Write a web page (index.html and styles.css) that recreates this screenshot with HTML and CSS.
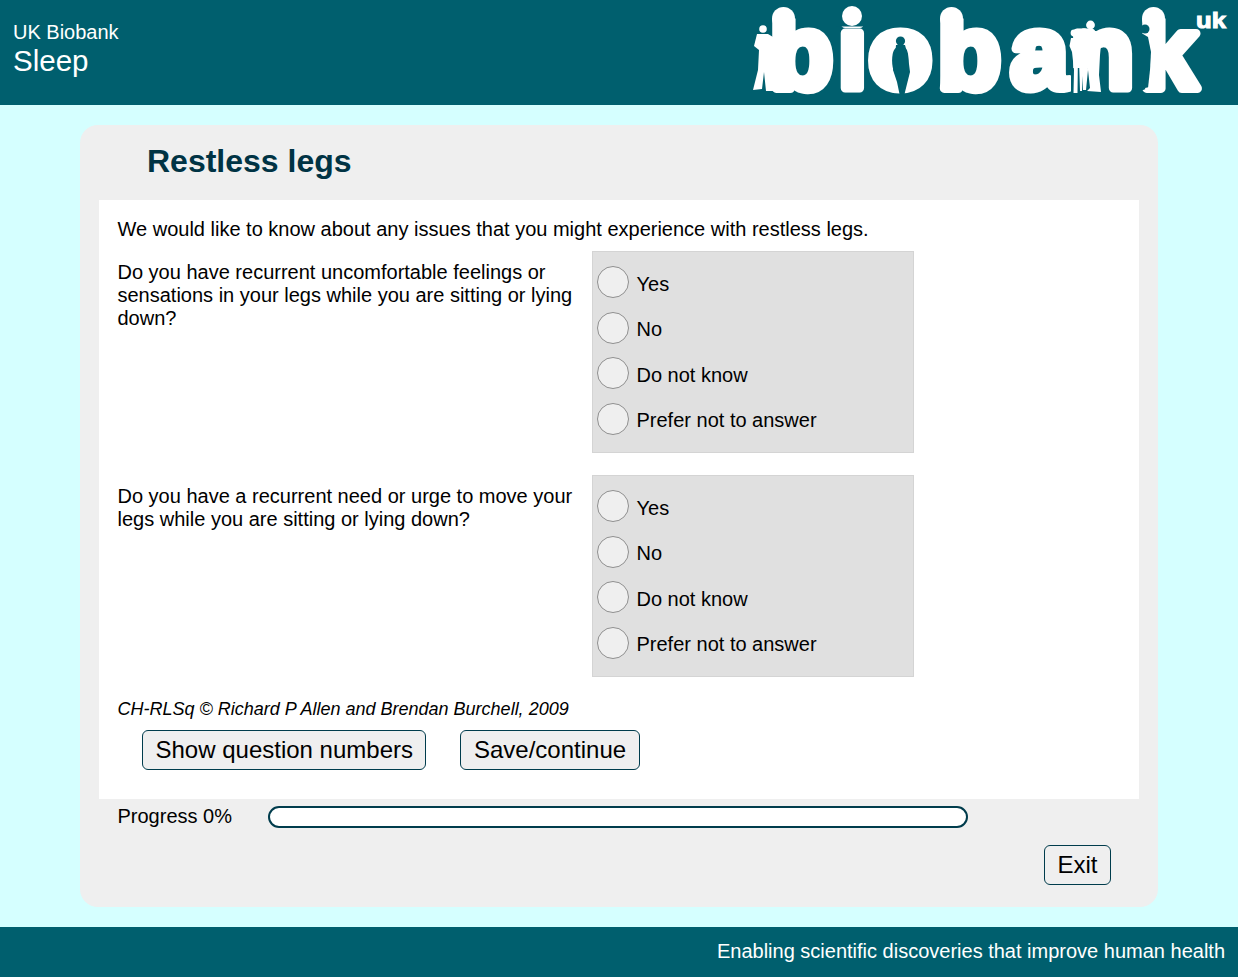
FILE: index.html
```html
<!DOCTYPE html>
<html lang="en">
<head>
  <meta charset="UTF-8" />
  <title>UK Biobank Sleep</title>
  <link rel="stylesheet" href="styles.css">
</head>
<body>

  <header class="topbar">
    <div class="study">
      <div class="study-org">UK Biobank</div>
      <div class="study-name">Sleep</div>
    </div>
    <svg class="logo" viewBox="0 0 498 105" role="img" aria-label="biobank uk">
      <text class="logo-word" x="29.5 98 128.5 197.5 270.5 330.5 399.5" y="88">biobank</text>
      <text class="logo-uk" x="456" y="28" textLength="30" lengthAdjust="spacingAndGlyphs">uk</text>

      <!-- round off the tall stems and the dot of the i -->
      <g class="teal">
        <rect x="30" y="0" width="27" height="18.5"/>
        <rect x="96" y="0" width="32" height="26.5"/>
        <rect x="198" y="0" width="27" height="18.5"/>
        <rect x="400" y="0" width="27" height="18.5"/>
      </g>
      <g class="white">
        <circle cx="43.5" cy="18.5" r="11.5"/>
        <circle cx="112" cy="16" r="10"/>
        <circle cx="211.5" cy="18.5" r="11.5"/>
        <circle cx="413.5" cy="18.5" r="11.5"/>
      </g>

      <!-- figure left of the b -->
      <g class="white">
        <circle cx="23" cy="29" r="3.8"/>
        <path d="M17 34 L28 34 L33 37 L33 91 L26 91 L24 72 L22 89 L13 90 L18 70 L19 50 L14 46 Z"/>
      </g>

      <!-- figure cut out of the o -->
      <g class="teal">
        <circle cx="160.5" cy="41" r="4.6"/>
        <path d="M156 45 L165 45 L168 56 L170 72 L167 84 L164.5 94 L159.5 94 L157 82 L153 70 L155 56 Z"/>
      </g>

      <!-- family standing in for the stem of the n -->
      <rect class="teal" x="331" y="68" width="31" height="27"/>
      <g class="white">
        <circle cx="334" cy="33" r="3.4"/>
        <path d="M331 38 L337 38 L338 52 L337.5 93 L333.5 93 L334 70 L332 52 L329.5 46 Z"/>
        <circle cx="344" cy="32" r="3.8"/>
        <path d="M340 37 L347 37 L348 70 L346 90 L343 90 L343 76 L342 91 L340 91 L339 60 Z"/>
        <circle cx="350.5" cy="25" r="4.4"/>
        <path d="M345 31 L356 31 L362 34 L360 55 L359 75 L361 92 L347 91 L350 88 L348 70 L346 45 Z"/>
      </g>

      <!-- figure cut into the k stem -->
      <g class="teal">
        <circle cx="405" cy="29" r="4.5"/>
        <path d="M396 30 L403 34 L408 37 L411 52 L410 70 L408 88 L396 93 Z"/>
      </g>
      <path class="white" d="M405 88 L414 86 L414 91 L406 91 Z"/>
    </svg>
  </header>

  <main class="card">
    <h1 class="card-title">Restless legs</h1>

    <div class="content">
      <p class="intro">We would like to know about any issues that you might experience with restless legs.</p>

      <div class="question">
        <div class="question-text">Do you have recurrent uncomfortable feelings or sensations in your legs while you are sitting or lying down?</div>
        <div class="answers">
          <label class="answer"><input type="radio" name="q1"><span>Yes</span></label>
          <label class="answer"><input type="radio" name="q1"><span>No</span></label>
          <label class="answer"><input type="radio" name="q1"><span>Do not know</span></label>
          <label class="answer"><input type="radio" name="q1"><span>Prefer not to answer</span></label>
        </div>
      </div>

      <div class="question">
        <div class="question-text">Do you have a recurrent need or urge to move your legs while you are sitting or lying down?</div>
        <div class="answers">
          <label class="answer"><input type="radio" name="q2"><span>Yes</span></label>
          <label class="answer"><input type="radio" name="q2"><span>No</span></label>
          <label class="answer"><input type="radio" name="q2"><span>Do not know</span></label>
          <label class="answer"><input type="radio" name="q2"><span>Prefer not to answer</span></label>
        </div>
      </div>

      <p class="credit">CH-RLSq © Richard P Allen and Brendan Burchell, 2009</p>

      <div class="actions">
        <button class="btn" type="button">Show question numbers</button>
        <button class="btn" type="button">Save/continue</button>
      </div>
    </div>

    <div class="progress">
      <span class="progress-label">Progress 0%</span>
      <div class="progress-bar"></div>
    </div>

    <div class="exit-row">
      <button class="btn" type="button">Exit</button>
    </div>
  </main>

  <footer class="bottombar">Enabling scientific discoveries that improve human health</footer>

</body>
</html>
```

FILE: styles.css
```css
html, body {
  margin: 0;
  padding: 0;
}

body {
  font-family: "Liberation Sans", Arial, sans-serif;
  background: #d5ffff;
  color: #000;
  min-height: 977px;
}

.topbar {
  height: 105px;
  background: #005f6e;
  color: #fff;
  display: flex;
  justify-content: space-between;
}

.study {
  padding: 21px 0 0 13px;
}

.study-org {
  font-size: 20px;
  line-height: 23px;
}

.study-name {
  font-size: 29.5px;
  line-height: 34px;
}

.logo {
  width: 498px;
  height: 105px;
  display: block;
  overflow: visible;
}

.logo-word {
  font-family: "Liberation Sans", Arial, sans-serif;
  font-weight: bold;
  font-size: 104px;
  fill: #fff;
  stroke: #fff;
  stroke-width: 9px;
  stroke-linejoin: round;
}

.logo-uk {
  font-family: "Liberation Sans", Arial, sans-serif;
  font-weight: bold;
  font-size: 22px;
  fill: #fff;
  stroke: #fff;
  stroke-width: 1px;
}

.white {
  fill: #fff;
}

.teal {
  fill: #005f6e;
}

.card {
  width: 1078px;
  height: 782px;
  margin: 20px 0 20px 80px;
  padding: 0 19px;
  box-sizing: border-box;
  background: #efefef;
  border-radius: 18px;
}

.card-title {
  margin: 0;
  height: 75px;
  padding: 18px 0 0 48px;
  box-sizing: border-box;
  font-size: 32px;
  line-height: 37px;
  font-weight: bold;
  color: #003344;
}

.content {
  height: 599px;
  box-sizing: border-box;
  background: #fff;
  padding: 18px 18.5px 0;
  font-size: 20px;
  line-height: 23px;
}

.intro {
  margin: 0 0 10px;
}

.question {
  display: flex;
  margin-bottom: 22px;
}

.question-text {
  width: 474.5px;
  padding: 10px 15px 0 0;
  box-sizing: border-box;
}

.answers {
  width: 322px;
  height: 202px;
  box-sizing: border-box;
  padding: 14px 4px 0;
  background: #e0e0e0;
  border: 1px solid #d4d4d4;
}

.answer {
  display: flex;
  align-items: center;
  gap: 7.5px;
  height: 32px;
  margin-bottom: 13.5px;
}

.answer input {
  appearance: none;
  width: 32px;
  height: 32px;
  margin: 0;
  background: #efefef;
  border: 1px solid #8f8f8f;
  border-radius: 50%;
}

.answer span {
  position: relative;
  top: 2px;
}

.credit {
  margin: 0;
  font-size: 18px;
  line-height: 21px;
  font-style: italic;
}

.actions {
  display: flex;
  gap: 34px;
  padding: 10px 0 0 24.5px;
}

.btn {
  height: 40px;
  padding: 0 12.5px;
  box-sizing: border-box;
  font-family: inherit;
  font-size: 24px;
  color: #000;
  background: #efefef;
  border: 1px solid #003c4c;
  border-radius: 6px;
}

.progress {
  display: flex;
  align-items: center;
  height: 35px;
  padding-left: 18.5px;
  font-size: 20px;
}

.progress-label {
  width: 150.5px;
}

.progress-bar {
  width: 700px;
  height: 22px;
  box-sizing: border-box;
  background: #fff;
  border: 2px solid #003c4c;
  border-radius: 11px;
}

.exit-row {
  display: flex;
  justify-content: flex-end;
  padding: 11px 28px 0 0;
}

.bottombar {
  height: 50px;
  box-sizing: border-box;
  padding: 13px 13px 0 0;
  background: #005f6e;
  color: #fff;
  font-size: 20px;
  line-height: 23px;
  text-align: right;
}
```
